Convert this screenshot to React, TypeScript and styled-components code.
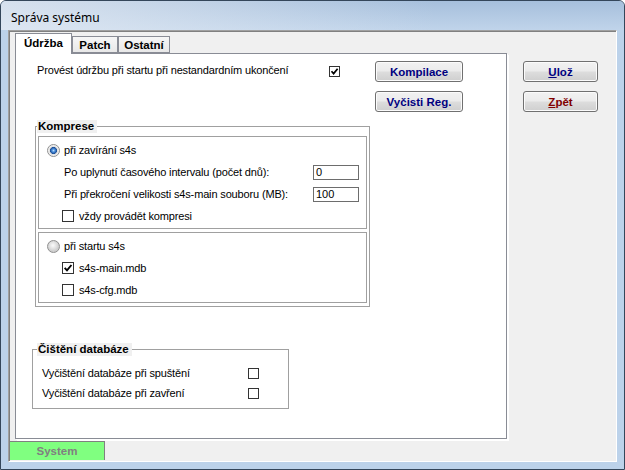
import React from 'react';
import styled, { createGlobalStyle } from 'styled-components';

const GlobalStyle = createGlobalStyle`
  html, body { margin: 0; padding: 0; background: #fff; }
  body { font-family: 'Liberation Sans', Arial, sans-serif; overflow: hidden; }
`;

const Window = styled.div`
  width: 625px;
  height: 470px;
  box-sizing: border-box;
  border: 1px solid #34465a;
  border-radius: 6px 6px 0 0;
  background: #bcd2ea;
  display: flex;
  flex-direction: column;
  overflow: hidden;
`;

const TitleBar = styled.div`
  height: 29px;
  flex-shrink: 0;
  box-sizing: border-box;
  padding: 9px 0 0 10px;
  font: 12px/16px 'Noto Sans', 'Open Sans', sans-serif;
  color: #000;
  background: linear-gradient(90deg, rgba(230, 236, 244, 0.75), rgba(230, 236, 244, 0) 70%),
    linear-gradient(#a6bfdc, #c0d4ea);
`;

const FrameBody = styled.div`
  flex: 1;
  display: flex;
  padding: 0 7px 7px 7px;
`;

const Client = styled.div`
  width: 609px;
  height: 432px;
  box-sizing: border-box;
  border: 1px solid;
  border-color: #a0a0a0 #fff #fff #a0a0a0;
  box-shadow: inset 1px 1px 0 #808080;
  padding: 1px 0 0 1px;
  background: #f0f0f0;
  display: flex;
  flex-direction: column;
`;

const Main = styled.div`
  height: 409px;
  display: flex;
  flex-shrink: 0;
`;

const TabArea = styled.div`
  margin: 1px 0 0 5px;
  display: flex;
  flex-direction: column;
`;

const TabStrip = styled.div`
  height: 20px;
  display: flex;
  align-items: flex-end;
`;

const Tab = styled.div<{ $active?: boolean; $w: number }>`
  width: ${p => p.$w}px;
  height: ${p => (p.$active ? 21 : 17)}px;
  margin-bottom: ${p => (p.$active ? -1 : 0)}px;
  position: relative;
  z-index: ${p => (p.$active ? 1 : 0)};
  box-sizing: border-box;
  border: 1px solid #898c95;
  border-bottom: ${p => (p.$active ? 'none' : '1px solid #898c95')};
  background: ${p => (p.$active ? '#fff' : 'linear-gradient(#f6f6f6, #e8e8e8)')};
  display: flex;
  align-items: center;
  justify-content: center;
  padding-bottom: ${p => (p.$active ? 2 : 0)}px;
  font: bold 11.5px 'Liberation Sans', Arial, sans-serif;
  color: #000;
`;

const Pane = styled.div`
  width: 492px;
  height: 386px;
  box-sizing: border-box;
  border: 1px solid #898c95;
  background: #fff;
  box-shadow: 1px 1px 0 #fff, 2px 2px 0 #fff;
  display: flex;
  flex-direction: column;
  align-items: flex-start;
`;

const TopRow = styled.div`
  display: flex;
  align-items: flex-start;
  margin: 7px 0 0 21px;
`;

const TopLabel = styled.div`
  width: 292px;
  margin-top: 1px;
  line-height: 14px;
`;

const Text = styled.span`
  font-size: 11px;
  letter-spacing: -0.15px;
  color: #000;
  white-space: nowrap;
`;

const ButtonCol = styled.div`
  display: flex;
  flex-direction: column;
  gap: 9px;
  margin-left: 35px;
`;

const Button = styled.button<{ $tone?: 'navy' | 'red' }>`
  width: 88px;
  height: 21px;
  box-sizing: border-box;
  border: 1px solid #707070;
  border-radius: 3px;
  background: linear-gradient(#f2f2f2 0%, #ebebeb 48%, #dddddd 52%, #cfcfcf 100%);
  box-shadow: inset 0 0 0 1px #fbfbfb;
  font: bold 11.5px 'Liberation Sans', Arial, sans-serif;
  color: ${p => (p.$tone === 'red' ? '#800000' : '#000080')};
  padding: 0;
  cursor: default;

  u { text-decoration: underline; }
`;

const SideCol = styled(ButtonCol)`
  margin: 29px 0 0 16px;
  gap: 9px;

  ${Button} { width: 75px; }
`;

const Group = styled.fieldset<{ $w: number; $pl: number }>`
  margin: 0;
  min-width: 0;
  width: ${p => p.$w}px;
  box-sizing: border-box;
  border: 1px solid #a0a0a0;
  padding: 0 2px 3px ${p => p.$pl}px;
`;

const Legend = styled.legend`
  margin: 0 0 0 -1px;
  padding: 0 3px 0 1px;
  background: #f0f0f0;
  font: bold 11.5px/13px 'Liberation Sans', Arial, sans-serif;
  color: #000;
`;

const Komprese = styled(Group)`
  margin: 8px 0 0 19px;
  padding-top: 3px;
`;

const Cisteni = styled(Group)`
  margin: 36px 0 0 16px;
  padding-top: 7px;
  padding-bottom: 5px;
`;

const Panel = styled.div<{ $gap?: number }>`
  border: 1px solid #a0a0a0;
  box-shadow: inset 1px 1px 0 #fff;
  padding: 2px 0 1px 0;
  margin-top: ${p => p.$gap ?? 0}px;
`;

const OptRow = styled.div<{ $indent: number; $gap: number }>`
  height: 22px;
  display: flex;
  align-items: center;
  padding-left: ${p => p.$indent}px;
  gap: ${p => p.$gap}px;
`;

const FieldRow = styled.div`
  height: 22px;
  display: grid;
  grid-template-columns: 249px 46px;
  align-items: center;
  padding-left: 25px;
`;

const Field = styled.input`
  width: 46px;
  height: 15px;
  box-sizing: border-box;
  border: 1px solid #6d6d6d;
  padding: 0 2px;
  font: 11px 'Liberation Sans', Arial, sans-serif;
  color: #000;
  outline: none;
`;

const CleanRow = styled.div`
  height: 20px;
  display: grid;
  grid-template-columns: 206px 11px;
  align-items: center;
  padding-left: 4px;
`;

const Box = styled.span<{ $size: number }>`
  width: ${p => p.$size}px;
  height: ${p => p.$size}px;
  box-sizing: border-box;
  border: 1px solid #333;
  background: #fff;
  display: inline-flex;
  align-items: center;
  justify-content: center;
  flex-shrink: 0;
`;

const Radio = styled.span<{ $on?: boolean }>`
  width: 13px;
  height: 13px;
  box-sizing: border-box;
  border-radius: 50%;
  border: 1px solid #8f8f8f;
  flex-shrink: 0;
  background: ${p =>
    p.$on
      ? 'radial-gradient(circle, #b9dcfb 0, #4b8fdc 1.5px, #1d4f97 3.2px, #dcdcdc 3.8px, #f7f7f7 5.5px)'
      : 'radial-gradient(circle at 45% 40%, #fbfbfb 0, #e4e4e4 3px, #cfcfcf 5.5px)'};
`;

const StatusBar = styled.div`
  height: 19px;
  flex-shrink: 0;
  display: flex;
`;

const StatusPanel = styled.div`
  width: 95px;
  box-sizing: border-box;
  border-top: 1px solid #808080;
  border-right: 1px solid #808080;
  background: #80ff80;
  display: flex;
  align-items: center;
  justify-content: center;
  font: bold 11.5px 'Liberation Sans', Arial, sans-serif;
  color: #808080;
`;

const Check = ({ on = false, size = 11 }: { on?: boolean; size?: number }) => (
  <Box $size={size}>
    {on && (
      <svg width={size - 2} height={size - 2} viewBox="0 0 9 9">
        <path d="M1.5 4.3 L3.6 6.6 L7.6 1.8" fill="none" stroke="#000" strokeWidth="1.7" />
      </svg>
    )}
  </Box>
);

export default function App() {
  return (
    <>
      <GlobalStyle />
      <Window>
        <TitleBar>Správa systému</TitleBar>
        <FrameBody>
          <Client>
            <Main>
              <TabArea>
                <TabStrip>
                  <Tab $active $w={57}>Údržba</Tab>
                  <Tab $w={46}>Patch</Tab>
                  <Tab $w={52}>Ostatní</Tab>
                </TabStrip>
                <Pane>
                  <TopRow>
                    <TopLabel>
                      <Text>Provést údržbu při startu při nestandardním ukončení</Text>
                    </TopLabel>
                    <div style={{ marginTop: 1 }}>
                      <Check on />
                    </div>
                    <ButtonCol>
                      <Button>Kompilace</Button>
                      <Button>Vyčisti Reg.</Button>
                    </ButtonCol>
                  </TopRow>

                  <Komprese $w={335} $pl={2}>
                    <Legend>Komprese</Legend>
                    <Panel>
                      <OptRow $indent={8} $gap={4}>
                        <Radio $on />
                        <Text>při zavírání s4s</Text>
                      </OptRow>
                      <FieldRow>
                        <Text>Po uplynutí časového intervalu (počet dnů):</Text>
                        <Field readOnly defaultValue="0" />
                      </FieldRow>
                      <FieldRow>
                        <Text>Při překročení velikosti s4s-main souboru (MB):</Text>
                        <Field readOnly defaultValue="100" />
                      </FieldRow>
                      <OptRow $indent={23} $gap={5}>
                        <Check size={12} />
                        <Text>vždy provádět kompresi</Text>
                      </OptRow>
                    </Panel>
                    <Panel $gap={3}>
                      <OptRow $indent={8} $gap={4}>
                        <Radio />
                        <Text>při startu s4s</Text>
                      </OptRow>
                      <OptRow $indent={23} $gap={5}>
                        <Check on size={12} />
                        <Text>s4s-main.mdb</Text>
                      </OptRow>
                      <OptRow $indent={23} $gap={5}>
                        <Check size={12} />
                        <Text>s4s-cfg.mdb</Text>
                      </OptRow>
                    </Panel>
                  </Komprese>

                  <Cisteni $w={257} $pl={5}>
                    <Legend>Čištění databáze</Legend>
                    <CleanRow>
                      <Text>Vyčištění databáze při spuštění</Text>
                      <Check />
                    </CleanRow>
                    <CleanRow>
                      <Text>Vyčištění databáze při zavření</Text>
                      <Check />
                    </CleanRow>
                  </Cisteni>
                </Pane>
              </TabArea>
              <SideCol>
                <Button>
                  <u>U</u>lož
                </Button>
                <Button $tone="red">
                  <u>Z</u>pět
                </Button>
              </SideCol>
            </Main>
            <StatusBar>
              <StatusPanel>System</StatusPanel>
            </StatusBar>
          </Client>
        </FrameBody>
      </Window>
    </>
  );
}
